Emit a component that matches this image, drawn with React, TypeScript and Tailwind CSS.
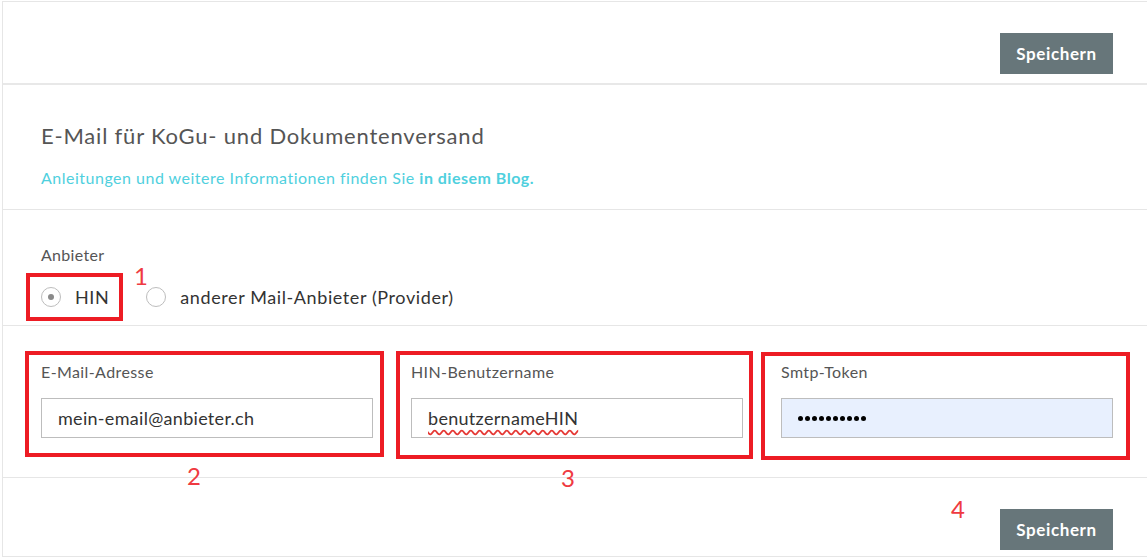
import React from "react";

const font = { fontFamily: "Lato, 'Open Sans', sans-serif" };

const SaveButton = () => (
  <button className="h-[41px] w-[113px] bg-[#67767a] text-[17px] font-bold tracking-[0.6px] text-white">
    Speichern
  </button>
);

const Radio = ({ checked, label }: { checked?: boolean; label: string }) => (
  <label className="flex items-center gap-[14px]">
    <span className="flex h-[20px] w-[20px] items-center justify-center rounded-full border border-[#bdbdbd] bg-white">
      {checked && <span className="h-[6px] w-[6px] rounded-full bg-[#8a8a8a]" />}
    </span>
    <span className="text-[18px] tracking-[0.6px] text-[#333]">{label}</span>
  </label>
);

const Field = ({
  label,
  children,
  className = "",
}: {
  label: string;
  children: React.ReactNode;
  className?: string;
}) => (
  <div className="flex flex-col">
    <span className="h-[20px] text-[16px] leading-[20px] tracking-[0.4px] text-[#555]">{label}</span>
    <div
      className={`mt-[16px] flex h-[40px] w-full items-center border border-[#bdbdbd] pl-[16px] text-[18px] tracking-[0.3px] text-[#333] ${className}`}
    >
      {children}
    </div>
  </div>
);

const Mark = ({ className }: { className: string }) => (
  <div className={`pointer-events-none absolute border-[4px] border-[#ed1c24] ${className}`} />
);

const Num = ({ n, className }: { n: string; className: string }) => (
  <span className={`pointer-events-none absolute text-[24px] leading-none text-[#ef3a41] ${className}`}>
    {n}
  </span>
);

export default function App() {
  return (
    <div className="relative h-[560px] w-[1147px] bg-white pl-[2px] pt-px" style={font}>
      <div className="border-l border-t border-[#e6e6e6]">
        <div className="flex h-[81px] justify-end pr-[34px] pt-[31px]">
          <SaveButton />
        </div>
        <div className="border-t-2 border-[#e8e8e8] pb-[21px] pl-[38px] pt-[37px]">
          <h2 className="text-[22px] leading-[28px] tracking-[0.8px] text-[#555]">
            E-Mail für KoGu- und Dokumentenversand
          </h2>
          <p className="mt-[18px] text-[16px] leading-[20px] tracking-[0.5px] text-[#4fd0de]">
            Anleitungen und weitere Informationen finden Sie{" "}
            <a className="font-bold">in diesem Blog.</a>
          </p>
        </div>
        <div className="border-t border-[#e6e6e6] pb-[14px] pl-[38px] pt-[35px]">
          <div className="text-[16px] leading-[20px] tracking-[0.3px] text-[#555]">Anbieter</div>
          <div className="mt-[18px] flex h-[28px] items-center gap-[37px]">
            <Radio checked label="HIN" />
            <Radio label="anderer Mail-Anbieter (Provider)" />
          </div>
        </div>
        <div className="grid grid-cols-3 gap-[38px] border-t border-[#e6e6e6] pb-[39px] pl-[38px] pr-[34px] pt-[36px]">
          <Field label="E-Mail-Adresse">mein-email@anbieter.ch</Field>
          <Field label="HIN-Benutzername">
            <span className="underline decoration-[#e53935] decoration-wavy underline-offset-[5px]">
              benutzernameHIN
            </span>
          </Field>
          <Field label="Smtp-Token" className="bg-[#e8f0fe]">
            <span className="flex gap-[2px]">
              {Array.from({ length: 10 }).map((_, i) => (
                <span key={i} className="h-[5px] w-[5px] rounded-full bg-black" />
              ))}
            </span>
          </Field>
        </div>
        <div className="flex h-[80px] justify-end border-b border-t border-[#e6e6e6] pr-[34px] pt-[31px]">
          <SaveButton />
        </div>
      </div>

      <Mark className="left-[26px] top-[273px] h-[48px] w-[97px]" />
      <Mark className="left-[25px] top-[351px] h-[106px] w-[359px]" />
      <Mark className="left-[396px] top-[351px] h-[108px] w-[357px]" />
      <Mark className="left-[761px] top-[352px] h-[108px] w-[369px]" />
      <Num n="1" className="left-[134px] top-[264px] text-[22px]" />
      <Num n="2" className="left-[187px] top-[464px]" />
      <Num n="3" className="left-[561px] top-[466px]" />
      <Num n="4" className="left-[951px] top-[497px]" />
    </div>
  );
}
